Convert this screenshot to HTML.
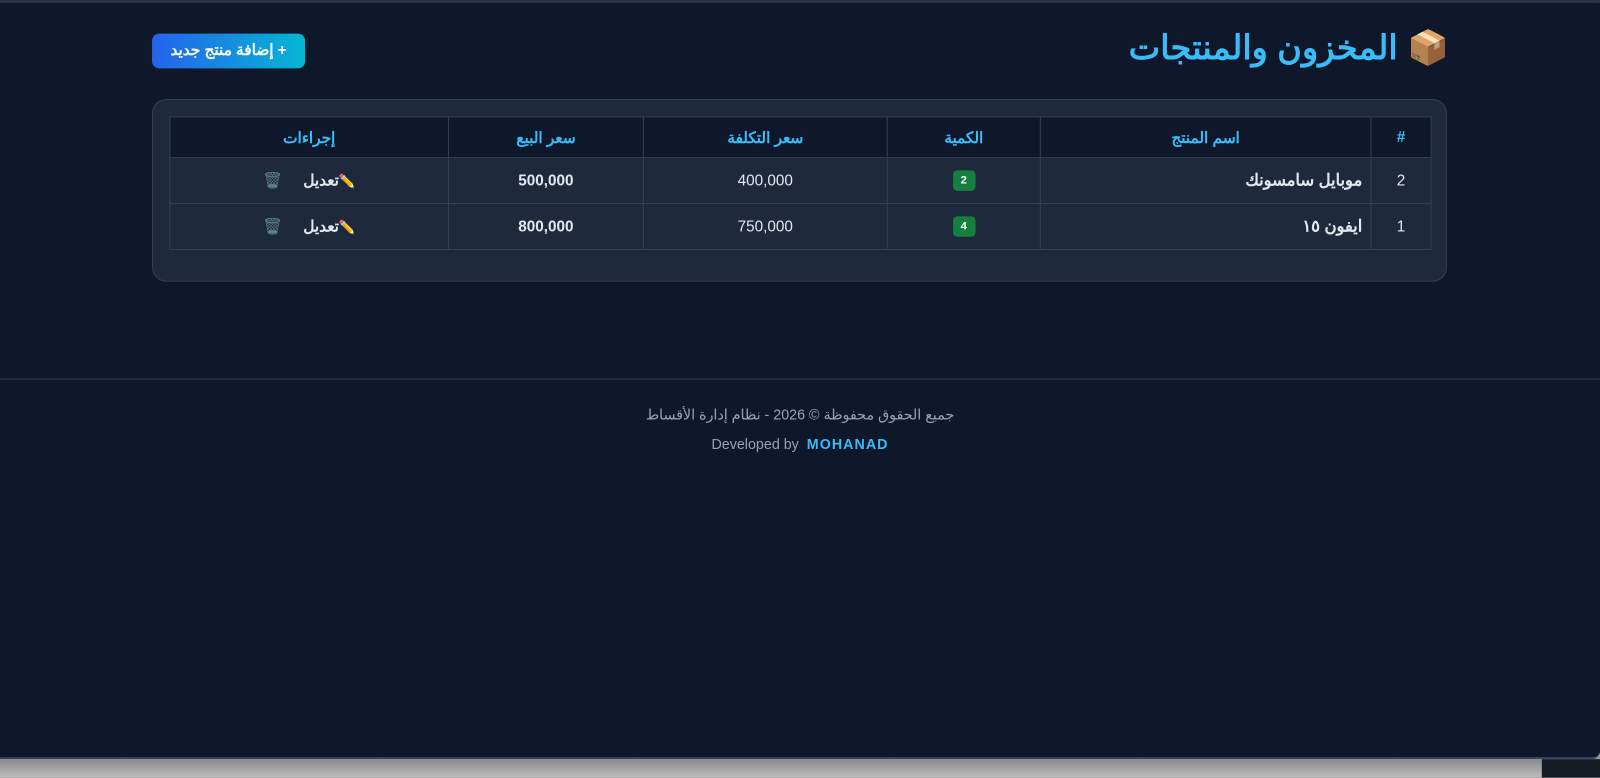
<!DOCTYPE html>
<html><head><meta charset="utf-8"><style>
*{box-sizing:border-box;margin:0;padding:0}
body{width:1600px;height:777px;overflow:hidden;background:#9a9a9a;font-family:"Liberation Sans","Noto Sans CJK SC",sans-serif;position:relative}
.sc{position:absolute;left:0;top:0;width:1568px;height:762px;transform:scale(1.0204);transform-origin:0 0}
.win{position:absolute;left:0;top:0;width:1568px;height:744px;background:#0f172a;border-top:3px solid #26324a;border-bottom:2px solid #3a4660;border-bottom-right-radius:8px}
.bot{position:absolute;left:0;top:744px;width:1568px;height:18px;background:linear-gradient(#8a8a8a,#bdbdbd)}
.bot .r{position:absolute;left:1511px;top:0;width:57px;height:18px;background:#161a22}
h1{position:absolute;right:148px;top:24px;color:#38bdf8;font-size:33px;font-weight:bold;direction:rtl}
.btn{position:absolute;left:149px;top:30px;width:150px;height:34px;border-radius:7px;background:linear-gradient(90deg,#2563eb,#06b6d4);color:#fff;font-weight:bold;font-size:15px;text-align:center;line-height:34px;direction:rtl}
.card{position:absolute;left:149px;top:94px;width:1269px;height:179px;background:#1e293b;border:1px solid #334155;border-radius:14px}
table{position:absolute;left:16px;top:16px;width:1237px;border-collapse:collapse;direction:rtl;font-size:15px;color:#e2e8f0}
th,td{border:1px solid #334155;text-align:center}
th{background:#0f172a;color:#38bdf8;height:40px;font-weight:bold}
td{height:45px}
.n{text-align:right;padding-right:8px;font-weight:bold;font-size:16px}
.b{font-weight:bold}
.badge{display:inline-block;background:#15803d;color:#fff;font-size:11px;font-weight:bold;border-radius:4px;width:22px;height:20px;line-height:20px}
.foot{position:absolute;left:0;top:368px;width:1568px;border-top:1px solid #334155;text-align:center;color:#94a3b8;font-size:14px}
</style></head><body>
<div class="sc">
<div class="win">
<h1>📦 المخزون والمنتجات</h1>
<div class="btn">+ إضافة منتج جديد</div>
<div class="card"><table>
<tr><th style="width:59px">#</th><th style="width:324px">اسم المنتج</th><th style="width:150px">الكمية</th><th style="width:239px">سعر التكلفة</th><th style="width:191px">سعر البيع</th><th>إجراءات</th></tr>
<tr><td>2</td><td class="n">موبايل سامسونك</td><td><span class="badge">2</span></td><td>400,000</td><td class="b">500,000</td><td class="b"><span style="font-size:13px">✏️</span>تعديل &nbsp;&nbsp;&nbsp; <span style="opacity:.6">🗑️</span></td></tr>
<tr><td>1</td><td class="n">ايفون ١٥</td><td><span class="badge">4</span></td><td>750,000</td><td class="b">800,000</td><td class="b"><span style="font-size:13px">✏️</span>تعديل &nbsp;&nbsp;&nbsp; <span style="opacity:.6">🗑️</span></td></tr>
</table></div>
<div class="foot"><div style="margin-top:26px;direction:rtl">جميع الحقوق محفوظة © 2026 - نظام إدارة الأقساط</div><div style="margin-top:12px">Developed by &nbsp;<b style="color:#38bdf8;letter-spacing:1px">MOHANAD</b></div></div>
</div>
<div class="bot"><div class="r"></div></div>
</div>
</body></html>
